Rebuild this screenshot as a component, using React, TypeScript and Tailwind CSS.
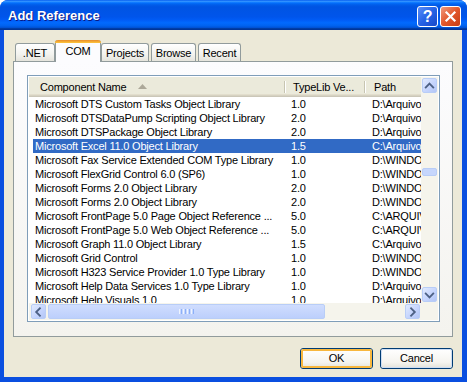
import React from "react";

const rows: [string, string, string][] = [
  ["Microsoft DTS Custom Tasks Object Library", "1.0", "D:\\Arquivos de programas"],
  ["Microsoft DTSDataPump Scripting Object Library", "2.0", "D:\\Arquivos de programas"],
  ["Microsoft DTSPackage Object Library", "2.0", "D:\\Arquivos de programas"],
  ["Microsoft Excel 11.0 Object Library", "1.5", "C:\\Arquivos de programas"],
  ["Microsoft Fax Service Extended COM Type Library", "1.0", "D:\\WINDOWS\\system32"],
  ["Microsoft FlexGrid Control 6.0 (SP6)", "1.0", "D:\\WINDOWS\\system32"],
  ["Microsoft Forms 2.0 Object Library", "2.0", "D:\\WINDOWS\\system32"],
  ["Microsoft Forms 2.0 Object Library", "2.0", "D:\\WINDOWS\\system32"],
  ["Microsoft FrontPage 5.0 Page Object Reference ...", "5.0", "C:\\ARQUIVOS DE PROGRAMAS"],
  ["Microsoft FrontPage 5.0 Web Object Reference ...", "5.0", "C:\\ARQUIVOS DE PROGRAMAS"],
  ["Microsoft Graph 11.0 Object Library", "1.5", "C:\\Arquivos de programas"],
  ["Microsoft Grid Control", "1.0", "D:\\WINDOWS\\system32"],
  ["Microsoft H323 Service Provider 1.0 Type Library", "1.0", "D:\\WINDOWS\\system32"],
  ["Microsoft Help Data Services 1.0 Type Library", "1.0", "D:\\Arquivos de programas"],
  ["Microsoft Help Visuals 1.0", "1.0", "D:\\Arquivos de programas"],
];

const font = "font-['Tahoma','Liberation_Sans',sans-serif] tracking-[-0.2px]";

function Chevron({ dir }: { dir: "up" | "down" | "left" | "right" }) {
  const d =
    dir === "up"
      ? "M3 8.5 L7 4.5 L11 8.5"
      : dir === "down"
      ? "M3 5.5 L7 9.5 L11 5.5"
      : dir === "left"
      ? "M8.5 3 L4.5 7 L8.5 11"
      : "M5.5 3 L9.5 7 L5.5 11";
  return (
    <svg width="14" height="14" viewBox="0 0 14 14">
      <path d={d} fill="none" stroke="#4D6185" strokeWidth="2" strokeLinecap="square" />
    </svg>
  );
}

function ScrollBtn({ dir }: { dir: "up" | "down" | "left" | "right" }) {
  return (
    <div className="w-[15px] h-[15px] m-[1px] rounded-[2px] border border-[#B8CDF7] bg-[linear-gradient(135deg,#E1EAFE,#C3D3FD_60%,#B3C6F6)] flex items-center justify-center shrink-0">
      <Chevron dir={dir} />
    </div>
  );
}

function Tab({ label, selected, w, ml }: { label: string; selected?: boolean; w: string; ml: string }) {
  if (selected) {
    return (
      <div
        className={`${w} ${ml} h-[22px] -mb-[1px] relative z-10 flex flex-col bg-[#FCFCFE] border-x border-[#919B9C] rounded-t-[3px]`}
      >
        <div className="h-[3px] rounded-t-[3px] bg-[linear-gradient(to_bottom,#E68B2C,#FFC73C)] -mx-[1px]" />
        <div className="flex-1 flex items-start justify-center pt-[1px] text-[11px] leading-[14px] text-black">{label}</div>
      </div>
    );
  }
  return (
    <div
      className={`${w} ${ml} h-[18px] flex items-center justify-center border-x border-t border-[#919B9C] rounded-t-[3px] bg-[linear-gradient(to_bottom,#FFFFFF,#F3F3EF_60%,#E5E4DC)] text-[11px] leading-[14px] text-black`}
    >
      {label}
    </div>
  );
}

function XPButton({ label, isDefault }: { label: string; isDefault?: boolean }) {
  return (
    <div className="w-[73px] h-[21px] rounded-[3px] border border-[#003C74] bg-[linear-gradient(to_bottom,#FFFFFF,#F5F4EF_70%,#E3E2DA)] flex">
      <div
        className={`flex-1 rounded-[2px] flex items-center justify-center text-[11px] text-black ${
          isDefault ? "border-2 border-[#F8B73E]" : "border border-[#CEDDF2]"
        }`}
      >
        {label}
      </div>
    </div>
  );
}

export default function App() {
  return (
    <div className={`w-[467px] h-[382px] flex flex-col rounded-t-[8px] overflow-hidden bg-[#0A4FE0] ${font}`}>
      {/* Title bar */}
      <div className="h-[30px] shrink-0 flex items-start bg-[linear-gradient(to_bottom,#0058EE_0%,#3593FF_4%,#288EFF_6%,#127DFF_8%,#036FFC_10%,#0262EE_14%,#0057E5_20%,#0054E3_24%,#0055EB_56%,#005BF5_66%,#026AFE_76%,#0062EF_86%,#0052D6_92%,#0040AB_94%,#003092_100%)]">
        <div className="pl-[8px] pt-[8px] text-[13px] leading-[16px] font-bold tracking-normal text-white [text-shadow:1px_1px_#0A1883] font-['Trebuchet_MS','Liberation_Sans',sans-serif]">
          Add Reference
        </div>
        <div className="ml-auto flex gap-[2px] pt-[6px] pr-[6px]">
          <div className="w-[21px] h-[21px] rounded-[3px] border border-white bg-[linear-gradient(135deg,#5A8DF8,#2563E6_50%,#1747C8)] flex items-center justify-center text-white font-bold text-[16px] leading-none font-['Liberation_Sans',sans-serif]">
            ?
          </div>
          <div className="w-[21px] h-[21px] rounded-[3px] border border-white bg-[linear-gradient(135deg,#F09A7E,#E2572B_50%,#C63D14)] flex items-center justify-center">
            <svg width="13" height="13" viewBox="0 0 13 13">
              <path d="M2.5 2.5 L10.5 10.5 M10.5 2.5 L2.5 10.5" stroke="white" strokeWidth="2.2" strokeLinecap="square" />
            </svg>
          </div>
        </div>
      </div>

      {/* Body */}
      <div className="flex-1 pl-[4px] pr-[5px] pb-[5px] flex">
        <div className="flex-1 bg-[#ECE9D8] pt-[10px] pl-[9px] flex flex-col">
          {/* Tabs */}
          <div className="h-[21px] w-[440px] flex items-end">
            <Tab label=".NET" w="w-[40px]" ml="ml-[2px]" />
            <Tab label="COM" selected w="w-[46px]" ml="ml-0" />
            <Tab label="Projects" w="w-[48px]" ml="ml-0" />
            <Tab label="Browse" w="w-[45px]" ml="ml-[2px]" />
            <Tab label="Recent" w="w-[43px]" ml="ml-[2px]" />
          </div>

          {/* Panel */}
          <div className="w-[440px] h-[276px] border border-[#919B9C] bg-[linear-gradient(to_bottom,#FCFCFE,#F4F3EE)] pl-[13px] pt-[13px]">
            {/* ListView */}
            <div className="w-[413px] h-[247px] border border-[#7F9DB9] bg-white p-[1px]">
              <div className="grid grid-cols-[392px_17px] grid-rows-[226px_17px] w-[409px] h-[243px]">
                {/* Content */}
                <div className="overflow-hidden flex flex-col">
                  {/* Header */}
                  <div className="h-[20px] shrink-0 flex flex-col bg-[#EBEADB]">
                    <div className="h-[17px] flex text-[11px] leading-[14px] text-black">
                      <div className="w-[255px] shrink-0 pl-[11px] pt-[3px] flex items-start">
                        <span>Component Name</span>
                        <svg className="ml-[12px] mt-[4px]" width="9" height="5" viewBox="0 0 9 5">
                          <path d="M0 5 L4.5 0 L9 5 Z" fill="#ACA899" />
                        </svg>
                      </div>
                      <div className="w-[2px] shrink-0 flex mt-[4px] h-[12px]">
                        <div className="w-[1px] bg-[#C7C5B2]" />
                        <div className="w-[1px] bg-white" />
                      </div>
                      <div className="w-[78px] shrink-0 pl-[7px] pt-[3px] whitespace-nowrap">TypeLib Ve...</div>
                      <div className="w-[2px] shrink-0 flex mt-[4px] h-[12px]">
                        <div className="w-[1px] bg-[#C7C5B2]" />
                        <div className="w-[1px] bg-white" />
                      </div>
                      <div className="flex-1 pl-[8px] pt-[3px]">Path</div>
                    </div>
                    <div className="h-[1px] bg-[#E2DECD]" />
                    <div className="h-[1px] bg-[#D6D2C2]" />
                    <div className="h-[1px] bg-[#CBC7B8]" />
                  </div>
                  {/* Rows */}
                  <div className="flex flex-col">
                    {rows.map((r, i) => {
                      const sel = i === 3;
                      return (
                        <div
                          key={i}
                          className={`ml-[4px] h-[14px] shrink-0 flex text-[11px] leading-[14px] whitespace-nowrap ${
                            sel ? "bg-[#316AC5] text-white" : "text-black"
                          }`}
                        >
                          <div className="w-[251px] shrink-0 pl-[2px] overflow-hidden">{r[0]}</div>
                          <div className="w-[80px] shrink-0 pl-[7px] overflow-hidden">{r[1]}</div>
                          <div className="flex-1 pl-[8px] overflow-hidden">{r[2]}</div>
                        </div>
                      );
                    })}
                  </div>
                </div>

                {/* Vertical scrollbar */}
                <div className="flex flex-col bg-[#F5F4EC]">
                  <ScrollBtn dir="up" />
                  <div className="flex-1 flex flex-col">
                    <div className="h-[74px]" />
                    <div className="mx-[1px] h-[8px] rounded-[2px] border border-[#B8CDF7] bg-[#C6D6FC]" />
                  </div>
                  <ScrollBtn dir="down" />
                </div>

                {/* Horizontal scrollbar */}
                <div className="flex bg-[#F5F4EC] pl-[1px]">
                  <ScrollBtn dir="left" />
                  <div className="flex-1 flex items-center">
                    <div className="ml-[1px] w-[277px] h-[15px] rounded-[2px] border border-[#B8CDF7] bg-[linear-gradient(to_bottom,#D0DDFE,#BCCFFC)] flex items-center justify-center gap-[1px]">
                      <div className="w-[1px] h-[5px] bg-[#EEF4FE]" />
                      <div className="w-[1px] h-[5px] bg-[#8CB0F8]" />
                      <div className="w-[1px] h-[5px] bg-[#EEF4FE]" />
                      <div className="w-[1px] h-[5px] bg-[#8CB0F8]" />
                      <div className="w-[1px] h-[5px] bg-[#EEF4FE]" />
                      <div className="w-[1px] h-[5px] bg-[#8CB0F8]" />
                      <div className="w-[1px] h-[5px] bg-[#EEF4FE]" />
                      <div className="w-[1px] h-[5px] bg-[#8CB0F8]" />
                    </div>
                  </div>
                  <ScrollBtn dir="right" />
                </div>

                {/* Corner */}
                <div className="bg-[#F5F4EC]" />
              </div>
            </div>
          </div>

          {/* Buttons */}
          <div className="w-[440px] mt-[11px] flex justify-end gap-[7px]">
            <XPButton label="OK" isDefault />
            <XPButton label="Cancel" />
          </div>
        </div>
      </div>
    </div>
  );
}
